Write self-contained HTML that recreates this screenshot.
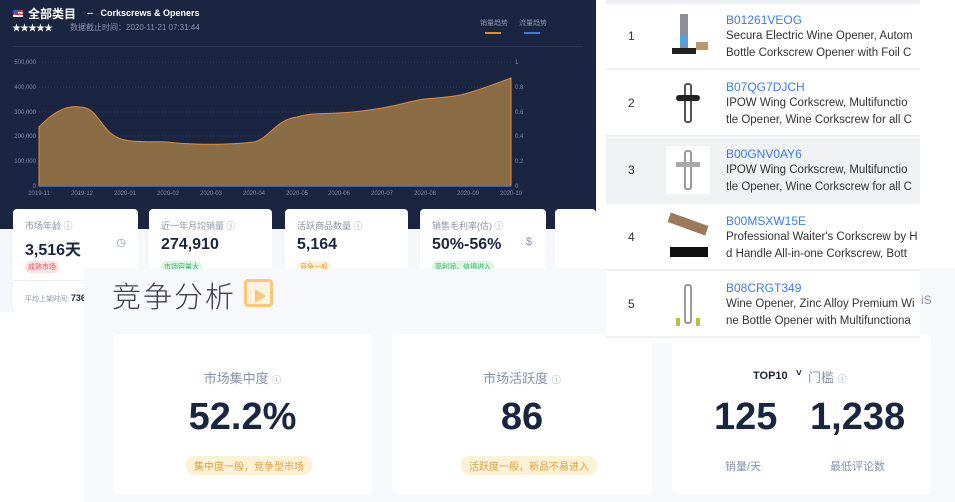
<!DOCTYPE html>
<html><head><meta charset="utf-8"><style>
*{margin:0;padding:0;box-sizing:border-box}
body{width:955px;height:502px;overflow:hidden;background:#fff;position:relative;font-family:"Liberation Sans","Noto Sans CJK SC",sans-serif}
.abs{position:absolute}
.dark{left:0;top:0;width:596px;height:229px;background:#1a2641}
.lg{left:0;top:229px;width:596px;height:83px;background:#f5f7fa}
.sc{background:#fff;border-radius:4px;top:209px;height:75px}
.sl{font-size:9px;color:#8a94a8;position:absolute;left:12px;top:10px}
.sv{font-size:16px;font-weight:bold;color:#1a2540;position:absolute;left:12px;top:27px}
.tag{position:absolute;left:12px;top:52px;font-size:7px;padding:1px 3px;border-radius:6px}
.comp{left:84px;top:269px;width:871px;height:233px;background:#f6f8fb}
.card{background:#fff;border-radius:6px;position:absolute;top:334px;height:161px;text-align:center}
.ct{position:absolute;width:100%;top:34px;font-size:13px;color:#8693ad}
.cv{position:absolute;width:100%;top:62px;font-size:38px;font-weight:bold;color:#1a2540}
.ctag{position:absolute;top:122px;font-size:10px;color:#e0a040;background:#fdf1d6;border-radius:8px;padding:2px 8px}
.tbl{left:606px;top:0;width:314px;height:343px;background:#fff;border-top:4px solid #eef0f3}
.row{position:absolute;left:0;width:314px;height:66px;border-bottom:2px solid #eef0f3}
.num{position:absolute;left:22px;top:25px;font-size:12px;color:#333}
.img{position:absolute;left:60px;top:8px;width:44px;height:48px}
.asin{position:absolute;left:120px;top:9px;font-size:12px;color:#3d7de0}
.desc{position:absolute;left:120px;top:24px;font-size:11.5px;color:#333;line-height:16.5px;white-space:nowrap;overflow:hidden;width:194px}
</style></head><body>
<div class="abs dark"></div>
<div class="abs lg"></div>
<div class="abs" style="left:13px;top:10px;width:10px;height:7px;background:linear-gradient(#c33 0 30%,#fff 30% 50%,#c33 50% 70%,#fff 70%);"><div style="width:5px;height:4px;background:#3a5bb0"></div></div>
<div class="abs" style="left:28px;top:5px;font-size:12px;font-weight:bold;color:#fff">全部类目</div>
<div class="abs" style="left:87px;top:8px;font-size:9px;color:#fff;font-weight:bold">--&nbsp;&nbsp; Corkscrews &amp; Openers</div>
<div class="abs" style="left:12px;top:21px;font-size:9px;color:#fff;letter-spacing:-1px">★★★★★</div>
<div class="abs" style="left:70px;top:22px;font-size:8px;color:#8a94aa">数据截止时间：2020-11-21 07:31:44</div>
<div class="abs" style="left:480px;top:18px;font-size:7px;color:#8a94aa">销量趋势</div>
<div class="abs" style="left:519px;top:18px;font-size:7px;color:#8a94aa">流量趋势</div>
<div class="abs" style="left:485px;top:32px;width:16px;height:2px;background:#e88a2a"></div>
<div class="abs" style="left:524px;top:32px;width:16px;height:2px;background:#3a7ae0"></div>
<div class="abs" style="left:13px;top:46px;width:570px;height:1px;background:#2a3754"></div>
<svg class="abs" style="left:0;top:50px" width="596" height="150" font-family="Liberation Sans" font-size="6" fill="#7f8aa0">
<g stroke="#33405e" stroke-dasharray="1,2"><line x1="39" y1="12" x2="511" y2="12"/><line x1="39" y1="37" x2="511" y2="37"/><line x1="39" y1="62" x2="511" y2="62"/><line x1="39" y1="86" x2="511" y2="86"/><line x1="39" y1="111" x2="511" y2="111"/></g>
<text x="36" y="14" text-anchor="end">500,000</text><text x="36" y="39" text-anchor="end">400,000</text><text x="36" y="64" text-anchor="end">300,000</text><text x="36" y="88" text-anchor="end">200,000</text><text x="36" y="113" text-anchor="end">100,000</text><text x="36" y="138" text-anchor="end">0</text>
<text x="515" y="14">1</text><text x="515" y="39">0.8</text><text x="515" y="64">0.6</text><text x="515" y="88">0.4</text><text x="515" y="113">0.2</text><text x="515" y="138">0</text>
<path d="M39,77 C55,60 68,55 80,57 C100,57 100,85 125,90 C140,93 160,91 168,92 C190,95 230,95 254,92 C270,88 275,70 297,67 C310,63 320,64 339,63 C360,62 370,60 382,58 C400,55 410,51 425,49 C445,47 455,47 468,43 C485,38 500,32 511,28 L511,136 L39,136 Z" fill="#8b6d45" stroke="#e88a2a" stroke-width="1"/>
<line x1="39" y1="136" x2="511" y2="136" stroke="#3a7ae0" stroke-width="1.5"/>
<g text-anchor="middle"><text x="39" y="145">2019-11</text><text x="82" y="145">2019-12</text><text x="125" y="145">2020-01</text><text x="168" y="145">2020-02</text><text x="211" y="145">2020-03</text><text x="254" y="145">2020-04</text><text x="297" y="145">2020-05</text><text x="339" y="145">2020-06</text><text x="382" y="145">2020-07</text><text x="425" y="145">2020-08</text><text x="468" y="145">2020-09</text><text x="511" y="145">2020-10</text></g>
</svg>
<div class="abs sc" style="left:13px;width:125px;height:103px"><div class="sl">市场年龄 ⓘ</div><div class="sv">3,516天</div><div class="abs" style="right:12px;top:27px;color:#8a94a8;font-size:11px">◷</div><div class="tag" style="background:#fde2e4;color:#e05a66">成熟市场</div><div class="abs" style="left:0;top:71px;width:125px;height:1px;background:#eef0f3"></div><div class="abs" style="left:12px;top:84px;font-size:7px;color:#8a94a8">平均上架时间: <b style="color:#1a2540;font-size:9px">736</b></div></div>
<div class="abs sc" style="left:149px;width:123px"><div class="sl">近一年月均销量 ⓘ</div><div class="sv">274,910</div><div class="tag" style="background:#dcf5e4;color:#3bb36a">市场容量大</div></div>
<div class="abs sc" style="left:285px;width:123px"><div class="sl">活跃商品数量 ⓘ</div><div class="sv">5,164</div><div class="tag" style="background:#fdf1d6;color:#e0a040">竞争一般</div></div>
<div class="abs sc" style="left:420px;width:126px"><div class="sl">销售毛利率(估) ⓘ</div><div class="sv">50%-56%</div><div class="abs" style="right:14px;top:27px;color:#8a94a8;font-size:11px">$</div><div class="tag" style="background:#dcf5e4;color:#3bb36a">高利润，值得进入</div></div>
<div class="abs sc" style="left:555px;width:41px"></div>

<div class="abs comp"></div>
<div class="abs" style="left:112px;top:274px;font-size:29px;color:#3a4050;font-weight:300;letter-spacing:2px">竞争分析</div>
<div class="abs" style="left:244px;top:279px;width:29px;height:28px;border:3px solid #f7c77c;border-radius:4px;background:#fdf3e3"><div style="position:absolute;left:8px;top:7px;width:0;height:0;border-left:11px solid #f7c77c;border-top:7px solid transparent;border-bottom:7px solid transparent"></div></div>

<div class="card" style="left:113px;width:259px"><div class="ct">市场集中度 <span style="font-size:9px">ⓘ</span></div><div class="cv">52.2%</div><div class="ctag" style="left:73px">集中度一般，竞争型市场</div></div>
<div class="card" style="left:392px;width:260px"><div class="ct">市场活跃度 <span style="font-size:9px">ⓘ</span></div><div class="cv">86</div><div class="ctag" style="left:69px">活跃度一般，新品不易进入</div></div>
<div class="card" style="left:672px;width:259px"><div class="abs" style="left:81px;top:36px;font-size:11px;font-weight:bold;color:#1a2540">TOP10</div><div class="abs" style="left:124px;top:34px;font-size:10px;font-weight:bold;color:#1a2540">˅</div><div class="abs" style="left:136px;top:33px;font-size:13px;color:#8693ad">门槛 <span style="font-size:9px">ⓘ</span></div><div class="abs" style="left:42px;top:62px;font-size:38px;font-weight:bold;color:#1a2540">125</div><div class="abs" style="left:138px;top:62px;font-size:38px;font-weight:bold;color:#1a2540">1,238</div><div class="abs" style="left:53px;top:124px;font-size:11px;color:#8693ad">销量/天</div><div class="abs" style="left:158px;top:124px;font-size:11px;color:#8693ad">最低评论数</div></div>

<div class="abs tbl">
<div class="row" style="top:0"><div class="num">1</div><div class="img"><div style="position:absolute;left:14px;top:2px;width:8px;height:34px;background:#8a8f98"></div><div style="position:absolute;left:14px;top:24px;width:8px;height:10px;background:#4aa3e8"></div><div style="position:absolute;left:6px;top:36px;width:24px;height:6px;background:#222"></div><div style="position:absolute;left:30px;top:30px;width:12px;height:8px;background:#b89a6a"></div></div><div class="asin">B01261VEOG</div><div class="desc">Secura Electric Wine Opener, Autom<br>Bottle Corkscrew Opener with Foil C</div></div>
<div class="row" style="top:67px"><div class="num">2</div><div class="img"><div style="position:absolute;left:18px;top:4px;width:8px;height:40px;border:2px solid #555;border-radius:3px"></div><div style="position:absolute;left:10px;top:16px;width:24px;height:6px;background:#222;border-radius:3px"></div></div><div class="asin">B07QG7DJCH</div><div class="desc">IPOW Wing Corkscrew, Multifunctio<br>tle Opener, Wine Corkscrew for all C</div></div>
<div class="row" style="top:134px;background:#f0f1f3"><div class="num">3</div><div class="img" style="background:#fff"><div style="position:absolute;left:18px;top:4px;width:8px;height:40px;border:2px solid #999;border-radius:3px"></div><div style="position:absolute;left:10px;top:16px;width:24px;height:5px;background:#aaa"></div></div><div class="asin">B00GNV0AY6</div><div class="desc">IPOW Wing Corkscrew, Multifunctio<br>tle Opener, Wine Corkscrew for all C</div></div>
<div class="row" style="top:201px"><div class="num">4</div><div class="img"><div style="position:absolute;left:2px;top:6px;width:40px;height:10px;background:#9a7a5a;transform:rotate(20deg)"></div><div style="position:absolute;left:4px;top:34px;width:38px;height:10px;background:#111"></div></div><div class="asin">B00MSXW15E</div><div class="desc">Professional Waiter's Corkscrew by H<br>d Handle All-in-one Corkscrew, Bott</div></div>
<div class="row" style="top:268px"><div class="num">5</div><div class="img"><div style="position:absolute;left:18px;top:4px;width:8px;height:40px;border:2px solid #999;border-radius:3px"></div><div style="position:absolute;left:10px;top:38px;width:4px;height:8px;background:#b8c040"></div><div style="position:absolute;left:30px;top:38px;width:4px;height:8px;background:#b8c040"></div></div><div class="asin">B08CRGT349</div><div class="desc">Wine Opener, Zinc Alloy Premium Wi<br>ne Bottle Opener with Multifunctiona</div></div>
</div>
<div class="abs" style="left:921px;top:293px;font-size:12px;color:#8693ad">iS</div>
</body></html>
